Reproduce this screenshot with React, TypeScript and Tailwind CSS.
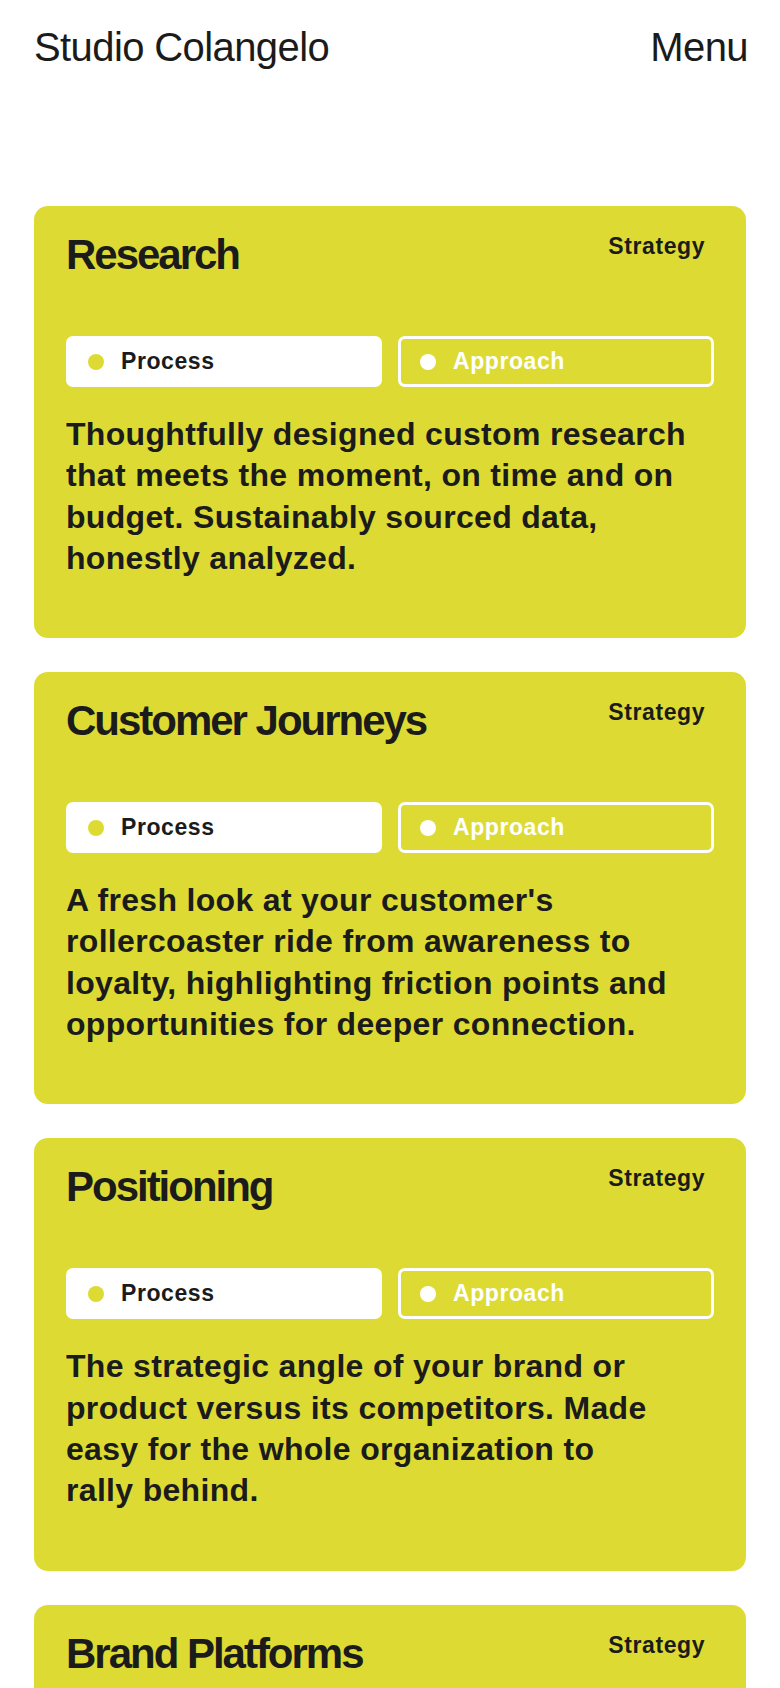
const services = [
  {
    title: 'Research',
    text: 'Thoughtfully designed custom research that meets the moment, on time and on budget. Sustainably sourced data, honestly\u00a0analyzed.',
  },
  {
    title: 'Customer Journeys',
    text: "A fresh look at your customer's rollercoaster ride from awareness to loyalty, highlighting friction points and opportunities for deeper\u00a0connection.",
  },
  {
    title: 'Positioning',
    text: 'The strategic angle of your brand or product versus its competitors. Made easy for the whole organization to rally\u00a0behind.',
  },
  {
    title: 'Brand Platforms',
    text: 'A clear articulation of who you are, what you stand for and how you show up, built to guide every\u00a0decision.',
  },
];

function ServiceCard({ title, text }: { title: string; text: string }) {
  return (
    <div className="rounded-[14px] bg-[#dddb33] px-8 pt-[28px] pb-[59px] text-[#1b1b1b]">
      <div className="flex items-start justify-between">
        <h2 className="text-[42px] font-bold leading-none tracking-[-0.048em]">{title}</h2>
        <span className="mt-[1px] mr-[9px] text-[23px] font-bold leading-none tracking-[0.025em]">Strategy</span>
      </div>

      <div className="mt-[60px] grid grid-cols-2 gap-4">
        <button
          type="button"
          className="flex h-[51px] items-center gap-[17px] rounded-[7px] bg-white pl-[22px] text-[23px] font-bold leading-none tracking-[0.025em]"
        >
          <span className="h-4 w-4 shrink-0 rounded-full bg-[#dddb33]" />
          Process
        </button>
        <button
          type="button"
          className="flex h-[51px] items-center gap-[17px] rounded-[7px] border-[3px] border-white pl-[19px] text-[23px] font-bold leading-none tracking-[0.025em] text-white"
        >
          <span className="h-4 w-4 shrink-0 rounded-full bg-white" />
          Approach
        </button>
      </div>

      <p className="mt-[27px] text-[32px] font-bold leading-[41.3px] tracking-[0.01em]">{text}</p>
    </div>
  );
}

export default function App() {
  return (
    <div className="min-h-screen bg-white font-['Liberation_Sans',Arial,sans-serif] text-[#1b1b1b]">
      <header className="flex items-start justify-between px-[34px] pt-[27px]">
        <a href="#" className="text-[40px] leading-none tracking-[-0.015em]">
          Studio Colangelo
        </a>
        <button type="button" className="-mr-[2px] text-[40px] leading-none tracking-[-0.015em]">
          Menu
        </button>
      </header>

      <main className="mt-[139px] flex flex-col gap-[34px] px-[34px] pb-10">
        {services.map((s) => (
          <ServiceCard key={s.title} title={s.title} text={s.text} />
        ))}
      </main>
    </div>
  );
}
